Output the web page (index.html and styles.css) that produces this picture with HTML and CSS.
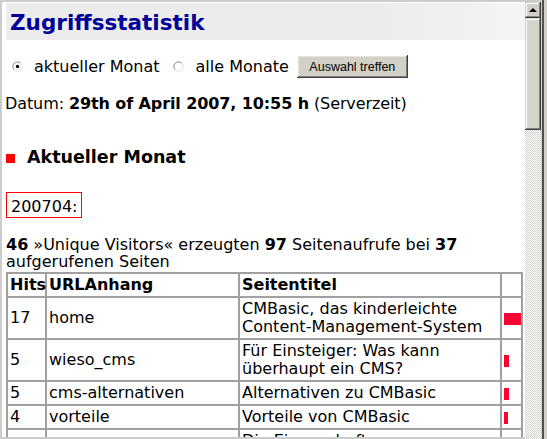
FILE: index.html
```html
<!DOCTYPE html>
<html lang="de">
<head>
<meta charset="utf-8">
<title>Zugriffsstatistik</title>
<link rel="stylesheet" href="styles.css">
</head>
<body>
<div class="window">
  <div class="viewport">
    <h1 class="title">Zugriffsstatistik</h1>
    <form class="choice">
      <svg class="radio r1" viewBox="0 0 12 12" width="12" height="12"><circle cx="6" cy="6" r="5" fill="#fff"/><path d="M2.46 9.54 A5 5 0 0 1 9.54 2.46" fill="none" stroke="#7a7a7a"/><path d="M9.54 2.46 A5 5 0 0 1 2.46 9.54" fill="none" stroke="#d8d8d8"/><circle cx="6" cy="6" r="1.8" fill="#000"/></svg>
      <span class="label l1">aktueller Monat</span>
      <svg class="radio r2" viewBox="0 0 12 12" width="12" height="12"><circle cx="6" cy="6" r="5" fill="#fff"/><path d="M2.46 9.54 A5 5 0 0 1 9.54 2.46" fill="none" stroke="#7a7a7a"/><path d="M9.54 2.46 A5 5 0 0 1 2.46 9.54" fill="none" stroke="#d8d8d8"/></svg>
      <span class="label l2">alle Monate</span>
      <button type="button" class="btn">Auswahl treffen</button>
    </form>
    <p class="date">Datum: <b>29th of April 2007, 10:55 h</b> (Serverzeit)</p>
    <h2 class="section"><span class="bullet"></span>Aktueller Monat</h2>
    <div class="month">200704:</div>
    <p class="summary"><b>46</b> »Unique Visitors« erzeugten <b>97</b> Seitenaufrufe bei <b>37</b> aufgerufenen Seiten</p>
    <table class="stats">
      <tr><th class="c-hits">Hits</th><th class="c-url">URLAnhang</th><th class="c-title">Seitentitel</th><th class="c-bar"></th></tr>
      <tr><td>17</td><td>home</td><td>CMBasic, das kinderleichte Content-Management-System</td><td><span class="bar" style="width:17px"></span></td></tr>
      <tr><td>5</td><td>wieso_cms</td><td>Für Einsteiger: Was kann überhaupt ein CMS?</td><td><span class="bar" style="width:5px"></span></td></tr>
      <tr><td>5</td><td>cms-alternativen</td><td>Alternativen zu CMBasic</td><td><span class="bar" style="width:5px"></span></td></tr>
      <tr><td>4</td><td>vorteile</td><td>Vorteile von CMBasic</td><td><span class="bar" style="width:4px"></span></td></tr>
      <tr><td>3</td><td>eigenschaften</td><td>Die Eigenschaften Leistungsmerkmale von CMBasic</td><td><span class="bar" style="width:3px"></span></td></tr>
    </table>
  </div>
  <div class="scrollbar">
    <div class="sb-btn"><span class="arrow-up"></span></div>
    <div class="sb-thumb"></div>
    <div class="sb-track"></div>
  </div>
  <div class="frame-right"></div>
</div>
</body>
</html>
```
FILE: styles.css
```css
html, body {
  margin: 0;
  padding: 0;
}
body {
  background: #fff;
  font-family: "DejaVu Sans", Verdana, sans-serif;
  font-size: 16px;
  color: #000;
}
.window {
  display: flex;
  width: 547px;
  height: 439px;
  box-sizing: border-box;
  padding: 2px 0 0 2px;
  background: #cccccc;
  overflow: hidden;
}
.viewport {
  flex: none;
  width: 523px;
  height: 435px;
  background: #fff;
  overflow: hidden;
}
.title {
  margin: 1px 0 0 4px;
  padding: 7px 0 5px 4px;
  font-size: 21.5px;
  line-height: 25px;
  font-weight: bold;
  color: #000099;
  background: linear-gradient(to right, #ececec 0%, #ececec 72%, #f4f4f4 100%);
}
.choice {
  display: flex;
  align-items: center;
  height: 23px;
  margin: 15px 0 0 0;
}
.radio {
  flex: none;
  width: 11px;
  height: 11px;
}
.r1 { margin-left: 10px; }
.r2 { margin-left: 13px; }
.label {
  line-height: 19px;
  white-space: nowrap;
}
.l1 { margin-left: 11px; }
.l2 { margin-left: 12px; }
.btn {
  flex: none;
  margin-left: 8px;
  width: 111px;
  height: 23px;
  padding: 0;
  border: none;
  background: #d4d0c8;
  font-family: "Liberation Sans", Arial, sans-serif;
  font-size: 12.5px;
  color: #000;
  box-shadow: inset -1px -1px #404040, inset 1px 1px #ffffff, inset -2px -2px #808080, inset 2px 2px #e4e2dc;
}
.date {
  margin: 16px 0 0 3px;
  line-height: 19px;
  letter-spacing: -0.1px;
}
.section {
  margin: 34px 0 0 4px;
  font-size: 17.5px;
  line-height: 21px;
  font-weight: bold;
}
.bullet {
  display: inline-block;
  width: 9px;
  height: 9px;
  margin-right: 12px;
  background: #ff0000;
}
.month {
  width: fit-content;
  margin: 24px 0 0 4px;
  padding: 4px 4px 1px 4px;
  line-height: 19px;
  border: 1px solid #ff0000;
}
.summary {
  margin: 18px 0 0 4px;
  line-height: 17px;
}
.stats {
  margin: 2px 0 0 4px;
  width: 517px;
  table-layout: fixed;
  border-collapse: separate;
  border-spacing: 0;
  border: 1px solid #a0a0a0;
}
.stats th, .stats td {
  box-sizing: border-box;
  border: 1px solid #a0a0a0;
  padding: 2px 2px;
  line-height: 18px;
  text-align: left;
  vertical-align: middle;
}
.stats th {
  font-weight: bold;
}
.c-hits { width: 39px; }
.c-url { width: 193px; }
.c-title { width: 262px; }
.c-bar { width: 21px; }
.bar {
  display: inline-block;
  height: 12px;
  vertical-align: middle;
  background: #ff0033;
}
.scrollbar {
  flex: none;
  width: 16px;
  height: 437px;
  display: flex;
  flex-direction: column;
}
.sb-btn {
  flex: none;
  height: 16px;
  display: flex;
  align-items: center;
  justify-content: center;
  background: #d4d0c8;
  box-shadow: inset -1px -1px #404040, inset 1px 1px #d4d0c8, inset -2px -2px #808080, inset 2px 2px #ffffff;
}
.arrow-up {
  width: 0;
  height: 0;
  border-left: 4px solid transparent;
  border-right: 4px solid transparent;
  border-bottom: 4px solid #000;
  margin-top: -1px;
}
.sb-thumb {
  flex: none;
  height: 112px;
  background: #d6d3cc;
  box-shadow: inset -1px -1px #404040, inset 1px 1px #d4d0c8, inset -2px -2px #808080, inset 2px 2px #ffffff;
}
.sb-track {
  flex: 1;
  background: repeating-conic-gradient(#d4d0c8 0 25%, #ffffff 0 50%) 0 0 / 2px 2px;
}
.frame-right {
  flex: none;
  width: 6px;
  height: 439px;
  margin-top: -2px;
  background: linear-gradient(to right, #d4d0c8 0 1px, #505050 1px 3px, #d4d0c8 3px 100%);
}
```
